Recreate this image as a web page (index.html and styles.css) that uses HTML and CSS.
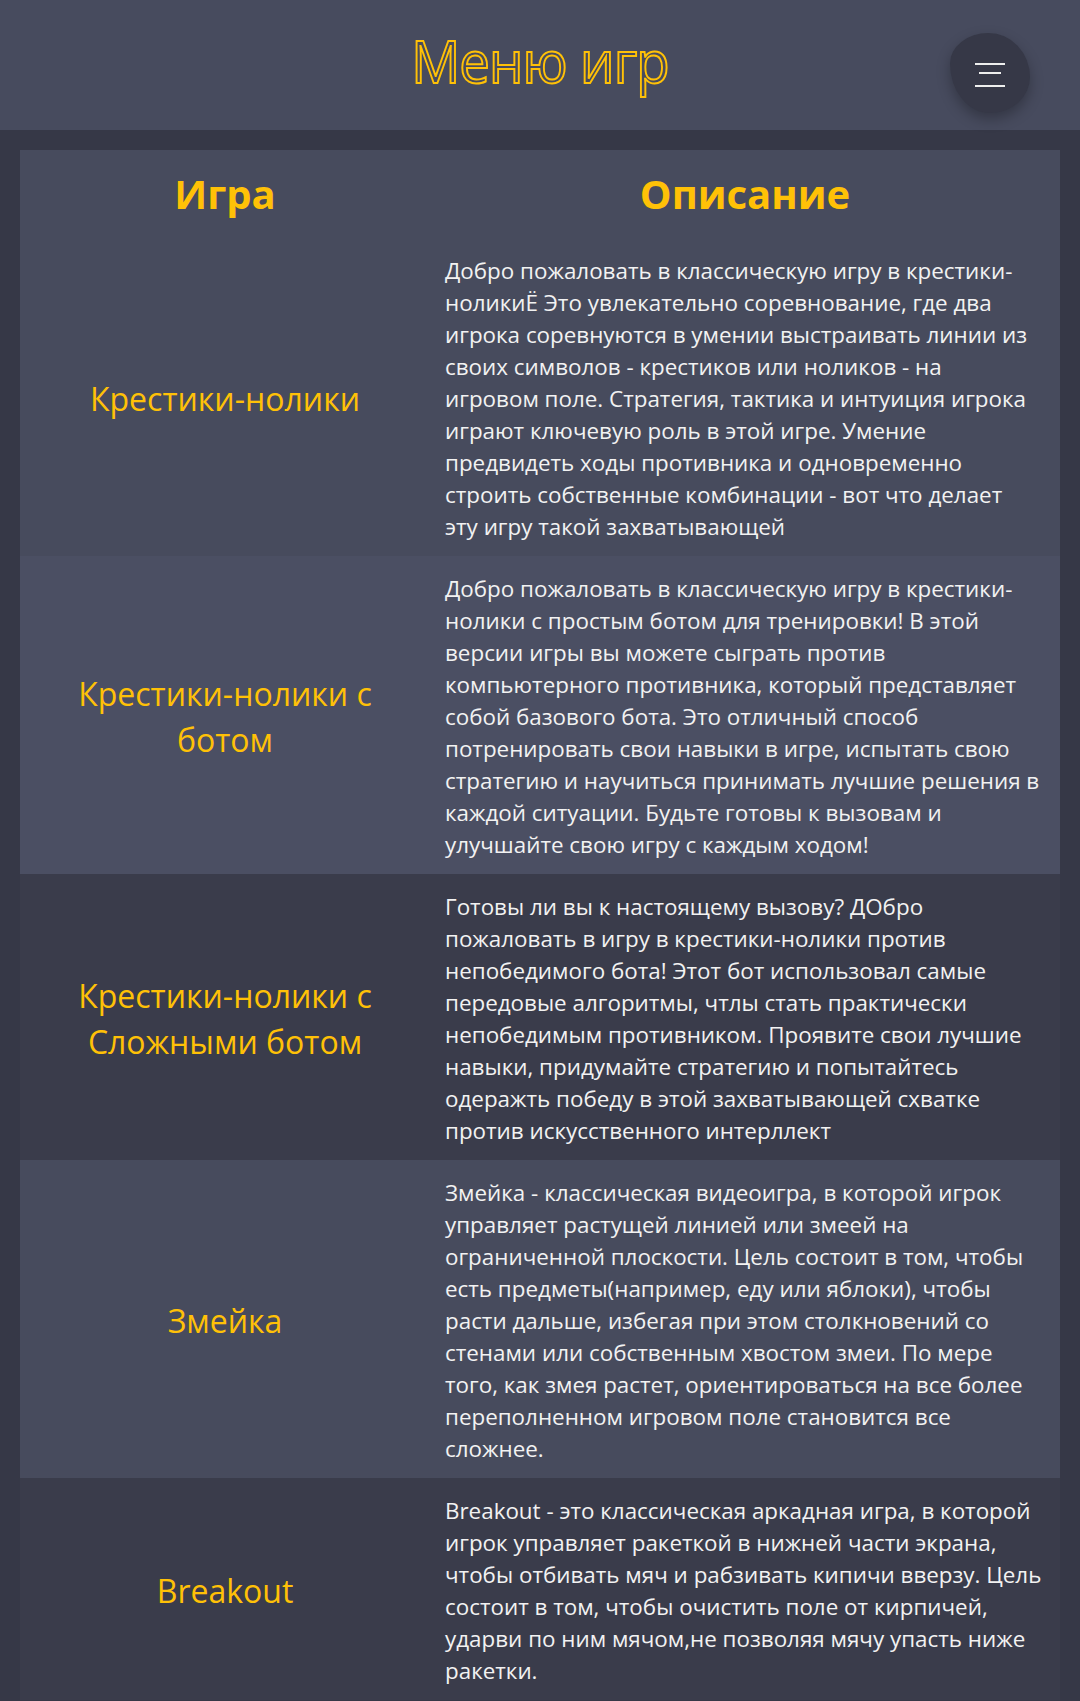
FILE: index.html
```html
<!DOCTYPE html>
<html lang="ru">
<head>
<meta charset="utf-8">
<title>Меню игр</title>
<link rel="stylesheet" href="styles.css">
</head>
<body>
<header class="topbar">
  <h1 class="title">Меню игр</h1>
  <button class="menu-btn" aria-label="Меню">
    <span class="bar bar-long"></span>
    <span class="bar bar-short"></span>
    <span class="bar bar-gap bar-long"></span>
  </button>
</header>
<main class="content">
  <table class="games">
    <thead>
      <tr class="row-a">
        <th class="col-name">Игра</th>
        <th class="col-desc">Описание</th>
      </tr>
    </thead>
    <tbody>
      <tr class="row-a">
        <td class="name">Крестики-нолики</td>
        <td class="desc">Добро пожаловать в классическую игру в крестики-ноликиЁ Это увлекательно соревнование, где два игрока соревнуются в умении выстраивать линии из своих символов - крестиков или ноликов - на<br>игровом поле. Стратегия, тактика и интуиция игрока играют ключевую роль в этой игре. Умение предвидеть ходы противника и одновременно строить собственные комбинации - вот что делает<br>эту игру такой захватывающей</td>
      </tr>
      <tr class="row-b">
        <td class="name">Крестики-нолики с ботом</td>
        <td class="desc">Добро пожаловать в классическую игру в крестики-нолики с простым ботом для тренировки! В этой версии игры вы можете сыграть против компьютерного противника, который представляет собой базового бота. Это отличный способ потренировать свои навыки в игре, испытать свою стратегию и научиться принимать лучшие решения в каждой ситуации. Будьте готовы к вызовам и улучшайте свою игру с каждым ходом!</td>
      </tr>
      <tr class="row-c">
        <td class="name">Крестики-нолики с Сложными ботом</td>
        <td class="desc">Готовы ли вы к настоящему вызову? ДОбро пожаловать в игру в крестики-нолики против непобедимого бота! Этот бот использовал самые передовые алгоритмы, чтлы стать практически непобедимым противником. Проявите свои лучшие навыки, придумайте стратегию и попытайтесь одеражть победу в этой захватывающей схватке против искусственного интерллект</td>
      </tr>
      <tr class="row-a">
        <td class="name">Змейка</td>
        <td class="desc">Змейка - классическая видеоигра, в которой игрок управляет растущей линией или змеей на ограниченной плоскости. Цель состоит в том, чтобы есть предметы(например, еду или яблоки), чтобы расти дальше, избегая при этом столкновений со стенами или собственным хвостом змеи. По мере того, как змея растет, ориентироваться на все более переполненном игровом поле становится все сложнее.</td>
      </tr>
      <tr class="row-c">
        <td class="name">Breakout</td>
        <td class="desc">Breakout - это классическая аркадная игра, в которой игрок управляет ракеткой в нижней части экрана, чтобы отбивать мяч и рабзивать кипичи вверзу. Цель состоит в том, чтобы очистить поле от кирпичей, ударви по ним мячом,не позволяя мячу упасть ниже ракетки.</td>
      </tr>
    </tbody>
  </table>
</main>
</body>
</html>
```
FILE: styles.css
```css
* { box-sizing: border-box; }

html, body {
  margin: 0;
  padding: 0;
}

body {
  background: #363847;
  font-family: "Open Sans", "Noto Sans", sans-serif;
  color: #f2f2f2;
}

.topbar {
  position: relative;
  height: 130px;
  background: #474b5e;
  display: flex;
  align-items: center;
  justify-content: center;
}

.title {
  margin: 0;
  font-family: "Open Sans", sans-serif;
  font-weight: 400;
  font-size: 58px;
  line-height: 1;
  color: transparent;
  -webkit-text-stroke: 2px #ffc107;
  letter-spacing: -1px;
  transform: translateY(-4px) scaleX(0.94);
}

.menu-btn {
  position: absolute;
  top: 33px;
  right: 50px;
  width: 80px;
  height: 80px;
  border: none;
  padding: 0;
  background: #363847;
  border-radius: 48% 52% 50% 50% / 38% 55% 45% 62%;
  box-shadow: 0 6px 14px rgba(0, 0, 0, 0.28);
  display: flex;
  flex-direction: column;
  align-items: center;
  justify-content: flex-start;
  padding-top: 30px;
  cursor: pointer;
}

.bar {
  display: block;
  height: 2px;
  background: #eeeeee;
}
.bar-long { width: 30px; }
.bar-short { width: 22px; margin-top: 7px; }
.bar-gap { margin-top: 11px; }

.content {
  padding: 20px;
}

.games {
  width: 1040px;
  border-collapse: collapse;
  border-spacing: 0;
}

.row-a { background: #474b5d; }
.row-b { background: #4b4f63; }
.row-c { background: #3a3c4b; }

th {
  color: #ffc107;
  font-weight: 700;
  font-size: 40px;
  line-height: 58px;
  padding: 15px;
  text-align: center;
}

.col-name { width: 410px; }

td {
  padding: 17px 15px 13px;
  vertical-align: middle;
}

.name {
  color: #ffc107;
  font-size: 32px;
  line-height: 46px;
  text-align: center;
}

.desc {
  font-size: 22.4px;
  line-height: 32px;
  text-align: left;
}
```
